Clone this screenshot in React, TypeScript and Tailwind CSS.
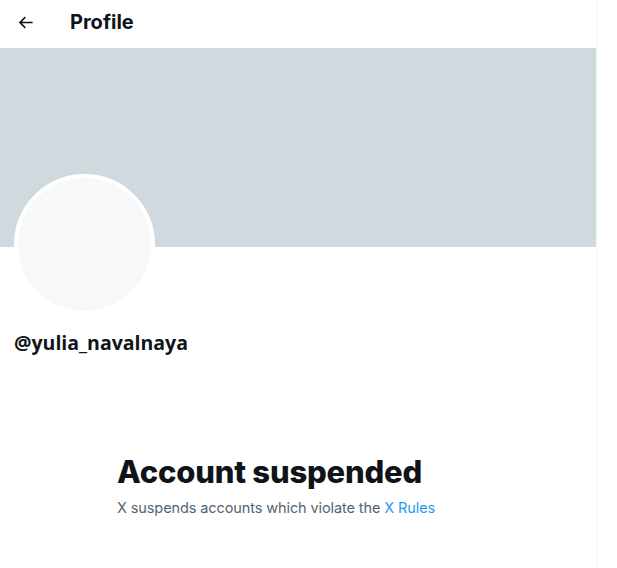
import React from "react";

export default function App() {
  return (
    <div className="flex w-[617px] h-[568px] bg-white overflow-hidden" style={{ fontFamily: "Inter, 'Noto Sans', sans-serif" }}>
      <div className="w-[596px] shrink-0 flex flex-col">
        <div className="h-[48px] flex items-center px-[16px] pb-[4px]">
          <svg viewBox="0 0 24 24" className="w-[19px] h-[19px] text-[#0f1419]" fill="currentColor">
            <path d="M7.414 13l5.043 5.04-1.414 1.42L3.586 12l7.457-7.46 1.414 1.42L7.414 11H21v2H7.414z" />
          </svg>
          <span className="ml-[35px] text-[20px] font-bold text-[#0f1419] leading-[24px]">Profile</span>
        </div>
        <div className="h-[199px] bg-[#cfd9de]" />
        <div className="relative h-[80px]">
          <div className="absolute left-[14px] top-[-73px] w-[141px] h-[141px] rounded-full bg-[#f7f9f9] border-[4px] border-white" />
        </div>
        <div className="px-[14px] mt-[4px] text-[19.5px] font-bold text-[#0f1419] leading-[24px]" style={{ fontFamily: "'Open Sans', sans-serif" }}>
          @yulia_navalnaya
        </div>
        <div className="mt-[99px] ml-[117px] w-[380px]">
          <div className="text-[31px] font-extrabold leading-[36px] text-[#0f1419] tracking-[-0.2px]">Account suspended</div>
          <div className="mt-[8px] text-[14.5px] leading-[20px] text-[#536471] tracking-[-0.1px]">
            X suspends accounts which violate the <span className="text-[#1d9bf0]">X Rules</span>
          </div>
        </div>
      </div>
      <div className="w-px bg-[#eff3f4]" />
      <div className="flex-1 bg-white" />
    </div>
  );
}
